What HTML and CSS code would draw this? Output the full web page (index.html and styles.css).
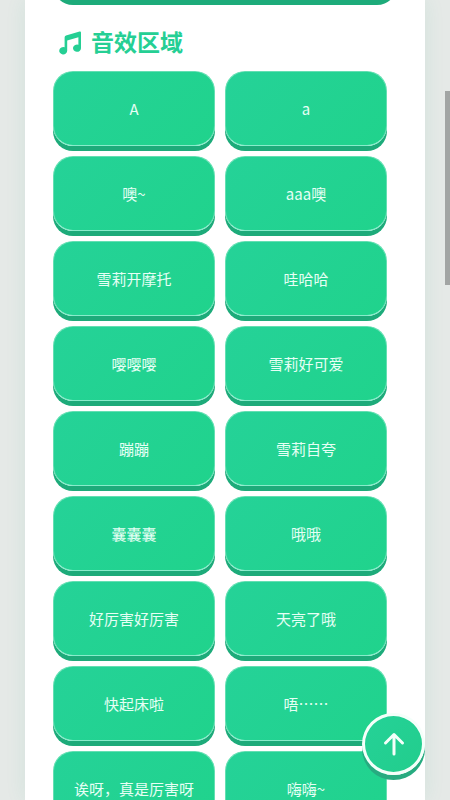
FILE: index.html
```html
<!DOCTYPE html>
<html lang="zh-CN">
<head>
<meta charset="utf-8">
<meta name="viewport" content="width=device-width, initial-scale=1">
<title>音效区域</title>
<link rel="stylesheet" href="styles.css">
</head>
<body>
<main class="page">
  <div class="banner"></div>
  <section class="section">
    <h2 class="title">
      <svg class="title-icon" viewBox="0 0 24 24" aria-hidden="true"><path d="M21.600 .6 8 4.600Q6.600 5 6.600 6.500V16.300A4 3.700 0 1 0 9.200 19.800V9.600L20.400 6.300V13.700A4 3.700 0 1 0 23 17.200V1.700Q23 .2 21.600 .6z"/></svg>
      <span>音效区域</span>
    </h2>
    <div class="sounds">
      <button class="sound" type="button">A</button>
      <button class="sound" type="button">a</button>
      <button class="sound" type="button">噢~</button>
      <button class="sound" type="button">aaa噢</button>
      <button class="sound" type="button">雪莉开摩托</button>
      <button class="sound" type="button">哇哈哈</button>
      <button class="sound" type="button">嘤嘤嘤</button>
      <button class="sound" type="button">雪莉好可爱</button>
      <button class="sound" type="button">蹦蹦</button>
      <button class="sound" type="button">雪莉自夸</button>
      <button class="sound" type="button">囊囊囊</button>
      <button class="sound" type="button">哦哦</button>
      <button class="sound" type="button">好厉害好厉害</button>
      <button class="sound" type="button">天亮了哦</button>
      <button class="sound" type="button">快起床啦</button>
      <button class="sound" type="button">唔……</button>
      <button class="sound" type="button">诶呀，真是厉害呀</button>
      <button class="sound" type="button">嗨嗨~</button>
    </div>
  </section>
</main>
<button class="to-top" type="button" aria-label="返回顶部">
  <svg class="to-top-icon" viewBox="0 0 24 24" aria-hidden="true"><path d="M12 22V2.500M3.500 11 12 2.500l8.500 8.500"/></svg>
</button>
<div class="scroll-thumb"></div>
</body>
</html>
```
FILE: styles.css
```css
* {
  box-sizing: border-box;
}

body {
  margin: 0;
  height: 100vh;
  overflow: hidden;
  background: #e5e9e7;
  font-family: "Noto Sans CJK SC", "Noto Sans", sans-serif;
}

.page {
  height: 100vh;
  overflow: hidden;
  margin: 0 25px;
  padding: 0 28px;
  background: #fff;
  box-shadow: 0 0 20px rgba(32, 178, 120, 0.09);
}

.banner {
  height: 75px;
  margin-top: -75px;
  border-radius: 20px;
  background: #22d393;
  box-shadow: 0 5px 0 #1dab7a;
}

.section {
  padding: 25px 10px 0 0;
}

.title {
  display: flex;
  align-items: center;
  gap: 9px;
  height: 32px;
  margin: 0 0 14px;
  padding-left: 5px;
  color: #25cf94;
  font-size: 23px;
  line-height: 32px;
  font-weight: 700;
}

.title-icon {
  width: 24px;
  height: 24px;
  margin-top: 4px;
  fill: currentColor;
}

.sounds {
  display: grid;
  grid-template-columns: 1fr 1fr;
  gap: 10px;
}

.sound {
  height: 75px;
  padding: 0 10px;
  border: 1px solid #63dfb2;
  border-bottom-color: #86ecca;
  border-radius: 20px;
  background: linear-gradient(135deg, #25d298, #20d38c);
  box-shadow: 0 5px 0 #1dab7a;
  color: #e6fff5;
  font: inherit;
  font-size: 15px;
  line-height: 22px;
  cursor: pointer;
}

.to-top {
  position: fixed;
  right: 25px;
  bottom: 25px;
  display: grid;
  place-items: center;
  width: 63px;
  height: 62px;
  padding: 0;
  border: 3px solid #f4fffa;
  border-radius: 50%;
  background: linear-gradient(135deg, #25d298, #22cd8c) border-box;
  box-shadow: 0 5px 0 #27ab80;
  cursor: pointer;
}

.to-top-icon {
  width: 24px;
  height: 24px;
  fill: none;
  stroke: #f4fffa;
  stroke-width: 3;
  stroke-linecap: round;
  stroke-linejoin: round;
}

.scroll-thumb {
  position: fixed;
  top: 91px;
  right: 0;
  width: 5px;
  height: 194px;
  background: #a2a5a4;
}
```
